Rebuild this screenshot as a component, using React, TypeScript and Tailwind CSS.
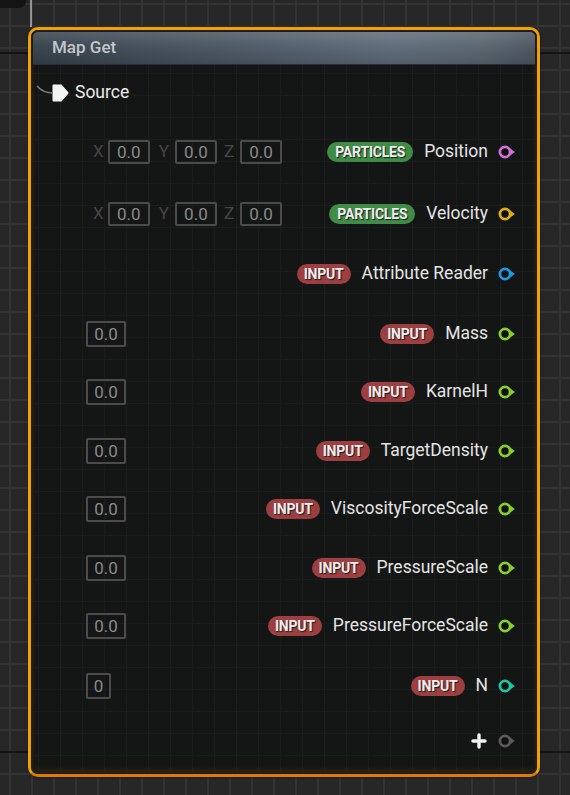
import React from "react";

const C = {
  pink: "#d56fd9",
  gold: "#dcae1f",
  blue: "#1b9be0",
  green: "#86cf2e",
  teal: "#1fc6a2",
  gray: "#5a5a5a",
};

function Pin({ color }: { color: string }) {
  return (
    <svg width="18" height="14" viewBox="0 0 18 14" className="shrink-0">
      <path d="M12 3.2 L16.8 7 L12 10.8 Z" fill={color} />
      <circle cx="7" cy="7" r="5.1" fill="#0f100f" stroke={color} strokeWidth="2.8" />
    </svg>
  );
}

function Badge({ kind }: { kind: "PARTICLES" | "INPUT" }) {
  const green = kind === "PARTICLES";
  return (
    <div
      className={
        "flex h-[20px] items-center justify-center rounded-full text-[14px] font-bold leading-none tracking-[-0.2px] text-[#eeeeee] [text-shadow:1px_1px_1px_#1a1a1a] " +
        (green ? "w-[86px] bg-[#3f8c47]" : "w-[54px] bg-[#9d3e40]")
      }
    >
      {kind}
    </div>
  );
}

function ValBox({ v, w }: { v: string; w: string }) {
  return (
    <div
      className={
        "flex h-[26px] items-center justify-center rounded-[2px] border-2 border-[#4b4b4b] text-[17px] leading-none text-[#8a8a8a] " +
        w
      }
    >
      {v}
    </div>
  );
}

function VecBox() {
  return (
    <div className="flex h-[24px] w-[42px] items-center justify-center rounded-[2px] border-2 border-[#4b4b4b] text-[17px] leading-none text-[#8a8a8a]">
      0.0
    </div>
  );
}

function Vec() {
  return (
    <div className="flex items-center pl-[60px] text-[17px] text-[#464646]">
      <span className="mr-[4px]">X</span>
      <VecBox />
      <span className="ml-[9px] mr-[6px]">Y</span>
      <VecBox />
      <span className="ml-[7px] mr-[6px]">Z</span>
      <VecBox />
    </div>
  );
}

function Right({
  badge,
  label,
  color,
}: {
  badge: "PARTICLES" | "INPUT";
  label: string;
  color: string;
}) {
  return (
    <div className="flex items-center">
      <Badge kind={badge} />
      <span className="ml-[11px] mr-[10px] text-[17.5px] leading-none text-[#e4e4e4]">{label}</span>
      <Pin color={color} />
    </div>
  );
}

export default function App() {
  return (
    <div className="relative h-[795px] w-[570px] overflow-hidden bg-[#272727] pl-[28px] pt-[27px] font-['Roboto','Liberation_Sans',sans-serif] bg-[linear-gradient(to_bottom,transparent_52px,#141414_52px,#141414_54px,transparent_54px,transparent_751px,#141414_751px,#141414_753px,transparent_753px),linear-gradient(to_right,#333333_2px,transparent_2px),linear-gradient(to_bottom,#333333_2px,transparent_2px)] [background-size:100%_100%,22px_22px,22px_22px] [background-position:0_0,9px_0,0_3px]">
      <svg
        className="pointer-events-none absolute left-0 top-0 z-20"
        width="570"
        height="795"
        viewBox="0 0 570 795"
      >
        <rect x="-12" y="-12" width="38" height="20" rx="7" fill="#141414" />
        <path d="M31 0 V27" stroke="#b8b8b8" strokeWidth="1.5" fill="none" />
        <path d="M37 86 Q43 93 53 93" stroke="#7a7a7a" strokeWidth="1.5" fill="none" />
      </svg>

      <div className="relative z-10 h-[750px] w-[512px] rounded-[10px] border-[3px] border-[#f0a300] border-b-[#e07a00] bg-[#1d1d1d] shadow-[0_0_3px_rgba(0,0,0,0.6)]">
        <div className="flex h-full flex-col overflow-hidden rounded-[7px] border-[2px] border-[#1e1e1e]">
          <div className="flex h-[33px] shrink-0 items-center border-b border-[#2b3036] pl-[19px] text-[17px] font-medium text-[#c3c7cb] bg-[linear-gradient(to_bottom,rgba(255,255,255,0.14),rgba(255,255,255,0.02)_45%,rgba(0,0,0,0.12)),linear-gradient(to_right,#37424c,#4c5865_40%,#5e6c7a_72%,#59656f_90%,#4b5561)]">
            Map Get
          </div>
          <div className="flex flex-1 flex-col bg-[#141615] pr-[19px] bg-[linear-gradient(to_right,#1b1d1c_1px,transparent_1px),linear-gradient(to_bottom,#1b1d1c_1px,transparent_1px)] [background-size:22px_22px] [background-position:5px_0,0_8px] shadow-[inset_0_-3px_4px_rgba(120,70,0,0.25)]">
            {/* Source */}
            <div className="mt-[13px] flex h-[30px] items-center pl-[19px]">
              <svg width="17" height="18" viewBox="0 0 17 18">
                <path
                  d="M1.5 1.5 H9 L15.5 9 L9 16.5 H1.5 Z"
                  fill="#f4f4f4"
                  stroke="#f4f4f4"
                  strokeWidth="2"
                  strokeLinejoin="round"
                />
              </svg>
              <span className="ml-[6px] text-[17.5px] leading-none text-[#ececec]">Source</span>
            </div>

            <div className="mt-[29px] flex h-[30px] items-center justify-between">
              <Vec />
              <Right badge="PARTICLES" label="Position" color={C.pink} />
            </div>

            <div className="mt-[32px] flex h-[30px] items-center justify-between">
              <Vec />
              <Right badge="PARTICLES" label="Velocity" color={C.gold} />
            </div>

            <div className="mt-[30px] flex h-[30px] items-center justify-end">
              <Right badge="INPUT" label="Attribute Reader" color={C.blue} />
            </div>

            <div className="mt-[30px] flex h-[30px] items-center justify-between pl-[53px]">
              <ValBox v="0.0" w="w-[40px]" />
              <Right badge="INPUT" label="Mass" color={C.green} />
            </div>

            <div className="mt-[28px] flex h-[30px] items-center justify-between pl-[53px]">
              <ValBox v="0.0" w="w-[40px]" />
              <Right badge="INPUT" label="KarnelH" color={C.green} />
            </div>

            <div className="mt-[29px] flex h-[30px] items-center justify-between pl-[53px]">
              <ValBox v="0.0" w="w-[40px]" />
              <Right badge="INPUT" label="TargetDensity" color={C.green} />
            </div>

            <div className="mt-[28px] flex h-[30px] items-center justify-between pl-[53px]">
              <ValBox v="0.0" w="w-[40px]" />
              <Right badge="INPUT" label="ViscosityForceScale" color={C.green} />
            </div>

            <div className="mt-[29px] flex h-[30px] items-center justify-between pl-[53px]">
              <ValBox v="0.0" w="w-[40px]" />
              <Right badge="INPUT" label="PressureScale" color={C.green} />
            </div>

            <div className="mt-[28px] flex h-[30px] items-center justify-between pl-[53px]">
              <ValBox v="0.0" w="w-[40px]" />
              <Right badge="INPUT" label="PressureForceScale" color={C.green} />
            </div>

            <div className="mt-[30px] flex h-[30px] items-center justify-between pl-[53px]">
              <ValBox v="0" w="w-[25px]" />
              <Right badge="INPUT" label="N" color={C.teal} />
            </div>

            <div className="mt-[25px] flex h-[30px] items-center justify-end">
              <svg width="16" height="16" viewBox="0 0 16 16" className="mr-[11px]">
                <path d="M8 2 V14 M2 8 H14" stroke="#f2f2f2" strokeWidth="3.4" strokeLinecap="round" />
              </svg>
              <Pin color={C.gray} />
            </div>
          </div>
        </div>
      </div>
    </div>
  );
}
